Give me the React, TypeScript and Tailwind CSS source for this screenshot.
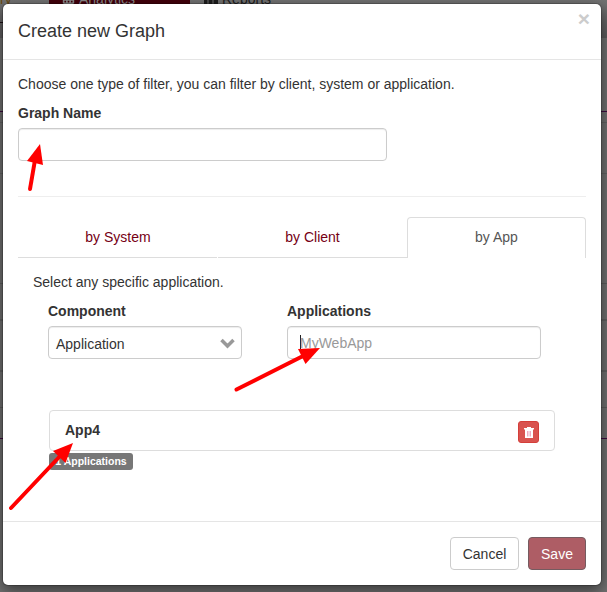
import React from "react";
import { FaCalendarAlt } from "react-icons/fa";

const input =
  "h-[33px] rounded-[4px] border border-[#ccc] bg-white shadow-[inset_0_1px_1px_rgba(0,0,0,0.075)]";

function Backdrop() {
  return (
    <div className="absolute inset-0 flex flex-col bg-[#727272]">
      <div className="flex h-[38px] shrink-0 items-start bg-linear-to-b from-[#747474] to-[#5e5c5e] text-[14px] leading-5">
        <div className="-mt-[11px] h-[34px] w-[49px] border-b border-[#1d1014] text-[#6b4a10]">ry</div>
        <div className="-mt-[11px] flex h-[30px] w-[141px] items-start gap-[4px] bg-[#43000b] pl-[13px] text-[#8a8a8a]">
          <FaCalendarAlt className="mt-[2px] size-[13px]" />
          Analytics
        </div>
        <div className="-mt-[11px] flex items-start gap-[4px] pl-[14px] text-[#1d1d1d]">
          <svg className="mt-[2px]" width="14" height="13" viewBox="0 0 14 13" fill="currentColor">
            <path d="M0 0H3.500V13H0ZM4.500 0H8.500V13H4.500ZM9.500 0H14V13H9.500Z" />
          </svg>
          Reports
        </div>
      </div>
      <div className="h-[74px] shrink-0 border-b border-[#3d0a40]" />
      <div className="h-[11px] shrink-0 border-b border-[#636363]" />
      <div className="h-[51px] shrink-0 border-b border-[#636363]" />
      <div className="h-[110px] shrink-0 border-b border-[#5e5e5e]" />
      <div className="h-[37px] shrink-0 border-b-2 border-[#626262]" />
      <div className="h-[51px] shrink-0 border-b-2 border-[#626262]" />
      <div className="h-[36px] shrink-0 border-b border-[#5e5e5e]" />
      <div className="h-[31px] shrink-0 border-b border-[#3d0a40]" />
    </div>
  );
}

function Arrows() {
  return (
    <svg className="pointer-events-none absolute inset-0" width="607" height="592" viewBox="0 0 607 592" fill="#f00" stroke="#f00">
      <g strokeWidth="4" strokeLinecap="round">
        <path d="M30 189L35 160" />
        <path d="M236.500 389.500L305 355" />
        <path d="M11 508L62 454" />
      </g>
      <g stroke="none">
        <path d="M40 144L27 161L43 165Z" />
        <path d="M320 348L298 349L305.500 364Z" />
        <path d="M73 443L53 451L65.500 463Z" />
      </g>
    </svg>
  );
}

export default function App() {
  return (
    <div className="relative h-[592px] w-[607px] overflow-hidden font-['Liberation_Sans',Arial,sans-serif] text-[14px] leading-5 text-[#333]">
      <Backdrop />
      <div className="relative ml-[2px] pt-[3px]">
        <div className="flex h-[583px] w-[600px] flex-col rounded-[6px] border border-black/20 bg-white bg-clip-padding shadow-[0_5px_15px_rgba(0,0,0,0.5)]">
          <header className="flex h-[56px] shrink-0 justify-between border-b border-[#e5e5e5] px-[15px]">
            <h4 className="pt-[14px] text-[18px] leading-[26px]">Create new Graph</h4>
            <button aria-label="Close" className="-mr-[4px] mt-[4px] h-[21px] text-[21px] leading-[21px] font-bold text-[#ccc]">×</button>
          </header>
          <main className="h-[461px] shrink-0 px-[15px] pt-[14px]">
            <p>Choose one type of filter, you can filter by client, system or application.</p>
            <div className="pt-[9px] font-bold">Graph Name</div>
            <div className={`mt-[5px] w-[369px] ${input}`} />
            <hr className="mt-[35px] border-[#eee]" />
            <nav className="mt-[20px] flex h-[41px] text-center leading-[41px] text-[#760014]">
              <div className="mr-px w-[199px] border-b border-[#ddd] pl-px">by System</div>
              <div className="w-[189px] border-b border-[#ddd]">by Client</div>
              <div className="w-[179px] rounded-t-[4px] border border-b-0 border-[#ddd] leading-[39px] text-[#555]">by App</div>
            </nav>
            <section className="px-[15px] pt-[14px]">
              <p>Select any specific application.</p>
              <div className="mt-[9px] flex gap-[45px] pl-[15px]">
                <div className="w-[194px]">
                  <div className="font-bold">Component</div>
                  <div className={`mt-[5px] flex items-center justify-between pt-[2px] pr-[6px] pl-[7px] ${input}`}>
                    Application
                    <svg width="15" height="11" viewBox="0 0 15 11" fill="none" stroke="#999" strokeWidth="3.500">
                      <path d="M1.500 2L7.500 8L13.500 2" />
                    </svg>
                  </div>
                </div>
                <div className="w-[254px]">
                  <div className="font-bold">Applications</div>
                  <div className={`mt-[5px] flex items-center pl-[12px] text-[#999] ${input}`}>
                    <span className="-mr-px h-[16px] w-px bg-[#222]" />
                    MyWebApp
                  </div>
                </div>
              </div>
              <div className="mt-[51px] ml-[16px] flex h-[41px] w-[506px] items-center justify-between rounded-[4px] border border-[#ddd] pr-[15px] pl-[15px] font-bold">
                <span className="-mt-[2px]">App4</span>
                <button aria-label="Delete" className="mt-[3px] flex h-[22px] w-[21px] items-center justify-center rounded-[3px] border border-[#d43f3a] bg-[#d9534f]">
                  <svg width="10" height="11" viewBox="0 0 10 11" fill="#fff">
                    <path d="M3 1V0H7V1H10V2.500H0V1ZM1 2.500H9V11H1Z" />
                    <path d="M3.500 4V9.500M5 4V9.500M6.500 4V9.500" stroke="#e58aa8" strokeWidth=".7" />
                  </svg>
                </button>
              </div>
              <div className="mt-[2px] ml-[16px] h-[17px] w-[84px] rounded-[3px] bg-[#777] text-center text-[10.500px] leading-[17px] font-bold text-white">1 Applications</div>
            </section>
          </main>
          <footer className="flex h-[64px] shrink-0 justify-end gap-[9px] border-t border-[#e5e5e5] px-[15px] pt-[15px]">
            <button className="h-[33px] w-[69px] rounded-[4px] border border-[#ccc] bg-white">Cancel</button>
            <button className="h-[33px] w-[58px] rounded-[4px] border border-[#755b60] bg-[#ae5d65] text-white">Save</button>
          </footer>
        </div>
      </div>
      <Arrows />
    </div>
  );
}
